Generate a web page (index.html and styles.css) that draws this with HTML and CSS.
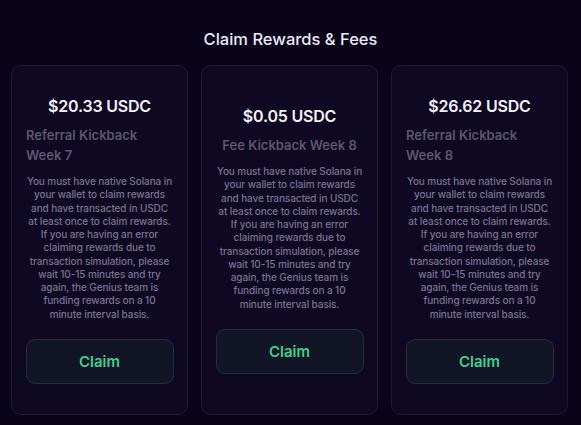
FILE: index.html
```html
<!DOCTYPE html>
<html lang="en">
<head>
<meta charset="utf-8">
<title>Claim Rewards &amp; Fees</title>
<link rel="stylesheet" href="styles.css">
</head>
<body>
<main class="page">
  <h1 class="heading">Claim Rewards &amp; Fees</h1>
  <section class="cards">
    <article class="card">
      <div class="amount">$20.33 USDC</div>
      <div class="label">Referral Kickback Week 7</div>
      <p class="desc">You must have native Solana in<br>your wallet to claim rewards<br>and have transacted in USDC<br>at least once to claim rewards.<br>If you are having an error<br>claiming rewards due to<br>transaction simulation, please<br>wait 10-15 minutes and try<br>again, the Genius team is<br>funding rewards on a 10<br>minute interval basis.</p>
      <button class="claim" type="button">Claim</button>
    </article>
    <article class="card">
      <div class="amount">$0.05 USDC</div>
      <div class="label">Fee Kickback Week 8</div>
      <p class="desc">You must have native Solana in<br>your wallet to claim rewards<br>and have transacted in USDC<br>at least once to claim rewards.<br>If you are having an error<br>claiming rewards due to<br>transaction simulation, please<br>wait 10-15 minutes and try<br>again, the Genius team is<br>funding rewards on a 10<br>minute interval basis.</p>
      <button class="claim" type="button">Claim</button>
    </article>
    <article class="card">
      <div class="amount">$26.62 USDC</div>
      <div class="label">Referral Kickback Week 8</div>
      <p class="desc">You must have native Solana in<br>your wallet to claim rewards<br>and have transacted in USDC<br>at least once to claim rewards.<br>If you are having an error<br>claiming rewards due to<br>transaction simulation, please<br>wait 10-15 minutes and try<br>again, the Genius team is<br>funding rewards on a 10<br>minute interval basis.</p>
      <button class="claim" type="button">Claim</button>
    </article>
  </section>
</main>
</body>
</html>
```
FILE: styles.css
```css
* { box-sizing: border-box; }
html, body {
  margin: 0;
  padding: 0;
  background: #09041a;
  height: 100%;
}
body {
  font-family: Inter, "Liberation Sans", sans-serif;
  color: #e8e4f5;
}
.page {
  padding: 29px 11px 10px;
}
.heading {
  margin: 0;
  text-align: center;
  font-size: 16.5px;
  font-weight: 500;
  line-height: 20px;
  color: #ece8f8;
  letter-spacing: 0;
}
.cards {
  margin-top: 16px;
  display: grid;
  grid-template-columns: repeat(3, 177px);
  column-gap: 13px;
}
.card {
  height: 350px;
  background: #0e0822;
  border: 1px solid #1f1936;
  border-radius: 10px;
  padding: 0 14px;
  display: flex;
  flex-direction: column;
  align-items: center;
  justify-content: center;
}
.amount {
  font-size: 16px;
  line-height: 20px;
  font-weight: 600;
  color: #f4f1fc;
  letter-spacing: -0.2px;
}
.label {
  margin-top: 9px;
  font-size: 13px;
  line-height: 20px;
  font-weight: 600;
  color: #5d566f;
  text-align: left;
  align-self: center;
}
.desc {
  margin: 10px 0 0;
  font-size: 10px;
  line-height: 13.25px;
  font-weight: 500;
  color: #7a7291;
  text-align: center;
  letter-spacing: -0.1px;
  white-space: nowrap;
}
.claim {
  margin-top: 18px;
  width: 148px;
  height: 45px;
  background: #111525;
  border: 1px solid #262b42;
  border-radius: 9px;
  color: #3fcf8e;
  font-family: inherit;
  font-size: 15px;
  font-weight: 600;
  cursor: pointer;
}
```
